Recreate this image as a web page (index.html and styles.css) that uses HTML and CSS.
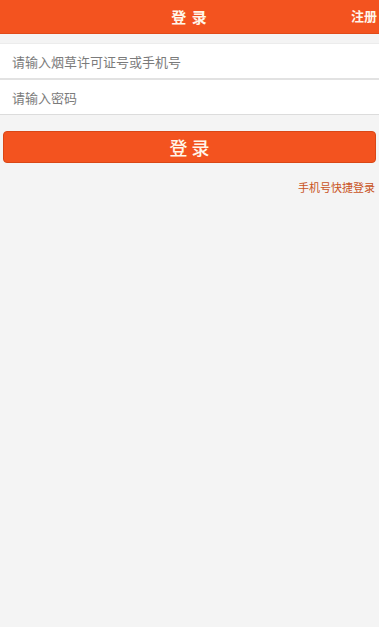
FILE: index.html
```html
<!DOCTYPE html>
<html lang="zh">
<head>
<meta charset="utf-8">
<title>登录</title>
<link rel="stylesheet" href="styles.css">
</head>
<body>
<header class="topbar">
  <div class="title">登 录</div>
  <a class="register">注册</a>
</header>
<main class="content">
  <div class="form">
    <div class="field"><input class="input" type="text" placeholder="请输入烟草许可证号或手机号"></div>
    <div class="field"><input class="input" type="password" placeholder="请输入密码"></div>
  </div>
  <div class="actions">
    <button class="login-btn">登录</button>
  </div>
  <div class="quick">
    <a class="quick-link">手机号快捷登录</a>
  </div>
</main>
</body>
</html>
```
FILE: styles.css
```css
html, body {
  margin: 0;
  padding: 0;
  height: 100%;
}
body {
  background: #f4f4f4;
  font-family: "Noto Sans CJK SC", "Noto Sans", sans-serif;
}
.topbar {
  height: 34px;
  background: #f3531f;
  display: flex;
  align-items: center;
  justify-content: center;
  position: relative;
  border-bottom: 1px solid #e14a19;
  box-sizing: border-box;
}
.title {
  color: #fff6ea;
  font-size: 15px;
  font-weight: 700;
  letter-spacing: 1px;
}
.register {
  position: absolute;
  right: 2px;
  top: 0;
  height: 34px;
  line-height: 32px;
  color: #fff6ea;
  font-size: 13px;
  font-weight: 700;
}
.content {
  padding-top: 9px;
}
.form {
  background: #fff;
  border-top: 1px solid #ececec;
  border-bottom: 1px solid #dcdcdc;
}
.field + .field {
  border-top: 2px solid #e2e2e2;
}
.input {
  display: block;
  width: 100%;
  height: 34px;
  border: 0;
  outline: none;
  padding: 0 12px;
  box-sizing: border-box;
  background: #fff;
  font-family: "Noto Sans CJK SC", sans-serif;
  font-size: 13px;
  color: #333;
}
.input::placeholder {
  color: #7b7b7b;
}
.actions {
  padding: 16px 3px 0;
}
.login-btn {
  display: block;
  width: 100%;
  height: 32px;
  border: 1px solid #d94716;
  border-radius: 4px;
  background: #f3531f;
  color: #fff6ea;
  font-family: "Noto Sans CJK SC", sans-serif;
  font-size: 18px;
  font-weight: 500;
  letter-spacing: 4px;
  padding: 0 0 0 4px;
}
.quick {
  display: flex;
  justify-content: flex-end;
  padding: 17px 4px 0;
}
.quick-link {
  color: #c9531c;
  font-size: 11px;
  line-height: 14px;
}
```
